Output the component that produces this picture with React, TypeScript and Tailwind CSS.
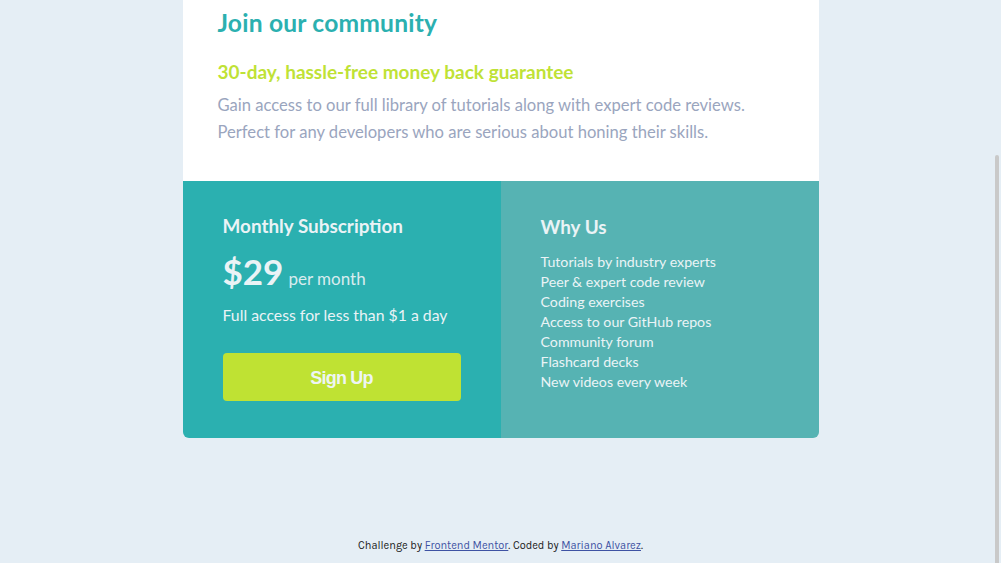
import React from "react";

const perks = [
  "Tutorials by industry experts",
  "Peer & expert code review",
  "Coding exercises",
  "Access to our GitHub repos",
  "Community forum",
  "Flashcard decks",
  "New videos every week",
];

export default function App() {
  return (
    <div className="min-h-[563px] bg-[#e5eef5] flex flex-col items-center font-['Lato',sans-serif]">
      <main className="w-[636px] rounded-b-md overflow-hidden">
        {/* intro */}
        <section className="bg-white pl-[35px] pr-8 pt-[7px] pb-[35px]">
          <h1 className="text-[24.6px] leading-[32px] font-bold text-[#2bb0b0] tracking-[0.2px]">
            Join our community
          </h1>
          <h2 className="mt-[21px] text-[19px] leading-[24px] font-bold text-[#bfe236]">
            30-day, hassle-free money back guarantee
          </h2>
          <p className="mt-[8px] text-[16.6px] leading-[27px] text-[#9aa5be]">
            Gain access to our full library of tutorials along with expert code reviews.
            <br />
            Perfect for any developers who are serious about honing their skills.
          </p>
        </section>

        {/* pricing + perks */}
        <section className="grid grid-cols-2 text-[#eaf3f6]">
          <div className="bg-[#2bb0b0] pl-10 pr-10 pt-[33px] pb-[37px]">
            <h3 className="text-[18.9px] leading-[24px] font-bold">Monthly Subscription</h3>
            <div className="mt-[14px] flex items-baseline gap-[5px]">
              <span className="text-[35px] leading-[38px] font-bold">$29</span>
              <span className="text-[17px] opacity-90">per month</span>
            </div>
            <p className="mt-[13px] text-[15.8px] leading-[20px]">Full access for less than $1 a day</p>
            <button className="mt-[28px] w-[238px] h-[48px] pt-[3px] rounded-[4px] bg-[#bfe233] text-[18px] font-bold text-[#eef5f3] font-['Liberation_Sans',sans-serif] tracking-[-0.8px]">
              Sign Up
            </button>
          </div>
          <div className="bg-[#56b3b3] pl-10 pr-8 pt-[34px]">
            <h3 className="text-[18.9px] leading-[24px] font-bold">Why Us</h3>
            <ul className="mt-[13px] text-[14.2px] leading-[20px]">
              {perks.map((p) => (
                <li key={p}>{p}</li>
              ))}
            </ul>
          </div>
        </section>
      </main>

      <footer className="mt-[101px] text-[11px] leading-[14px] text-[#1a1a1a] font-['Karla','Lato',sans-serif]">
        Challenge by{" "}
        <a href="#" className="text-[#3e52a3] underline">
          Frontend Mentor
        </a>
        . Coded by{" "}
        <a href="#" className="text-[#3e52a3] underline">
          Mariano Alvarez
        </a>
        .
      </footer>

      {/* overlay scrollbar thumb */}
      <div className="fixed right-[2px] top-[155px] bottom-0 w-[4px] rounded-t-sm bg-[#c9c9c9]" />
    </div>
  );
}
